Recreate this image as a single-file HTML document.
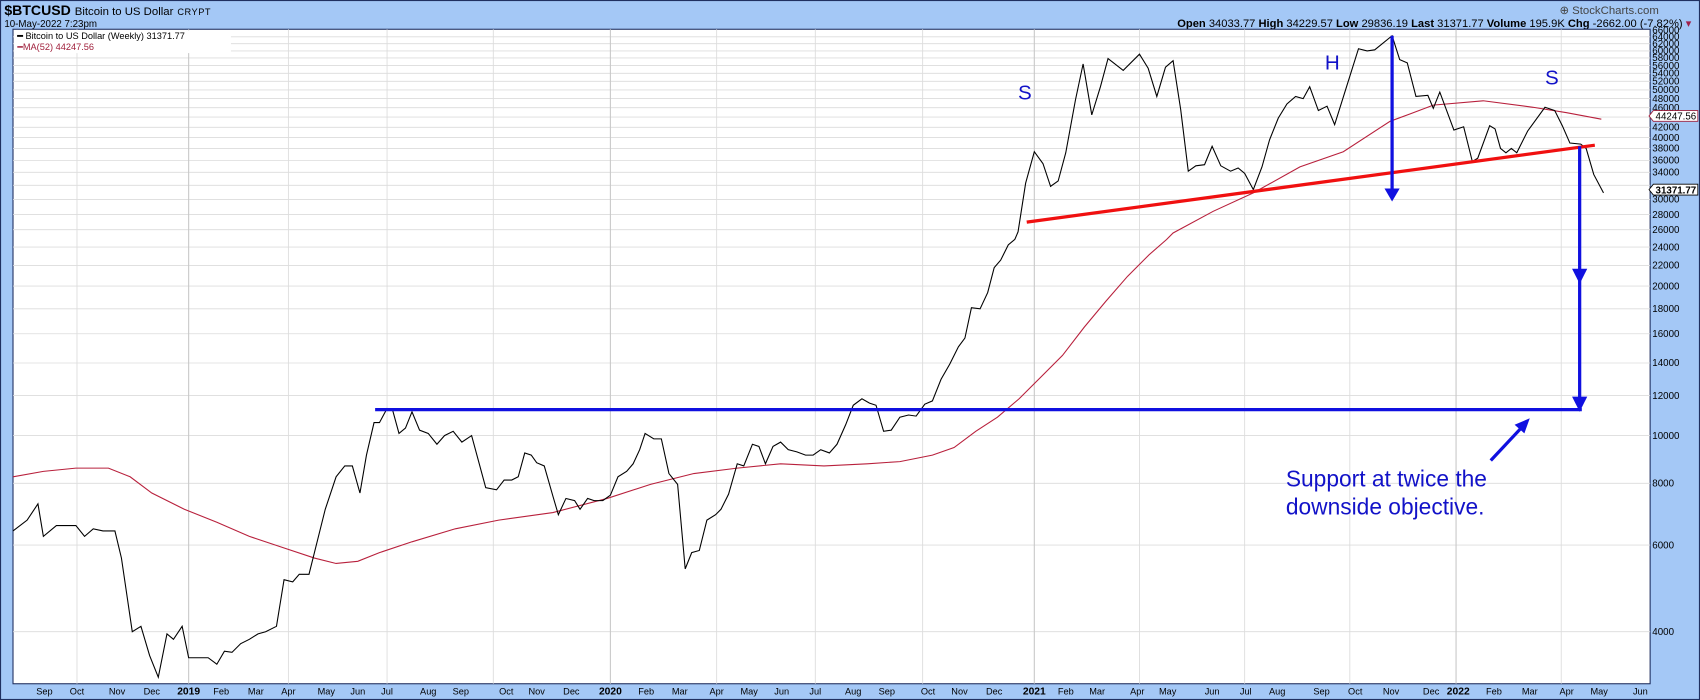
<!DOCTYPE html>
<html><head><meta charset="utf-8"><style>
html,body{margin:0;padding:0;background:#a4c8f6;}
svg{display:block;}
text{font-family:"Liberation Sans",sans-serif;}
</style></head><body>
<svg width="1700" height="700" viewBox="0 0 1568 646" preserveAspectRatio="none" xmlns="http://www.w3.org/2000/svg">
<rect x="0" y="0" width="1568" height="646" fill="#a4c8f6"/>
<rect x="0.5" y="0.5" width="1567" height="645" fill="none" stroke="#203060" stroke-width="1"/>
<text x="4" y="14" font-size="13" font-weight="bold" fill="#000">$BTCUSD <tspan font-weight="normal" font-size="10.5">Bitcoin to US Dollar</tspan> <tspan font-weight="normal" font-size="8.5" letter-spacing="0.5">CRYPT</tspan></text>
<text x="4" y="25" font-size="9" fill="#000">10-May-2022 7:23pm</text>
<text x="1530" y="13" font-size="10.5" text-anchor="end" fill="#444">⊕ StockCharts.com</text>
<text x="1560" y="25" font-size="10.3" text-anchor="end" fill="#000"><tspan font-weight="bold">Open</tspan> 34033.77 <tspan font-weight="bold">High</tspan> 34229.57 <tspan font-weight="bold">Low</tspan> 29836.19 <tspan font-weight="bold">Last</tspan> 31371.77 <tspan font-weight="bold">Volume</tspan> 195.9K <tspan font-weight="bold">Chg</tspan> -2662.00 (-7.82%) <tspan fill="#a0204a">▾</tspan></text>
<rect x="12" y="27" width="1510" height="604" fill="#fff" stroke="#203060" stroke-width="1"/>
<g stroke="#dcdcdc" stroke-width="0.8">
<line x1="12" x2="1522" y1="583" y2="583"/><line x1="12" x2="1522" y1="503" y2="503"/><line x1="12" x2="1522" y1="446" y2="446"/><line x1="12" x2="1522" y1="402" y2="402"/><line x1="12" x2="1522" y1="365" y2="365"/><line x1="12" x2="1522" y1="335" y2="335"/><line x1="12" x2="1522" y1="308" y2="308"/><line x1="12" x2="1522" y1="285" y2="285"/><line x1="12" x2="1522" y1="264" y2="264"/><line x1="12" x2="1522" y1="245" y2="245"/><line x1="12" x2="1522" y1="228" y2="228"/><line x1="12" x2="1522" y1="212" y2="212"/><line x1="12" x2="1522" y1="198" y2="198"/><line x1="12" x2="1522" y1="184" y2="184"/><line x1="12" x2="1522" y1="171" y2="171"/><line x1="12" x2="1522" y1="159" y2="159"/><line x1="12" x2="1522" y1="148" y2="148"/><line x1="12" x2="1522" y1="137" y2="137"/><line x1="12" x2="1522" y1="127" y2="127"/><line x1="12" x2="1522" y1="117.5" y2="117.5"/><line x1="12" x2="1522" y1="108" y2="108"/><line x1="12" x2="1522" y1="99.4" y2="99.4"/><line x1="12" x2="1522" y1="91" y2="91"/><line x1="12" x2="1522" y1="83" y2="83"/><line x1="12" x2="1522" y1="75" y2="75"/><line x1="12" x2="1522" y1="67.7" y2="67.7"/><line x1="12" x2="1522" y1="60.5" y2="60.5"/><line x1="12" x2="1522" y1="53.5" y2="53.5"/><line x1="12" x2="1522" y1="47" y2="47"/><line x1="12" x2="1522" y1="40.3" y2="40.3"/><line x1="12" x2="1522" y1="34" y2="34"/>
<line x1="71" x2="71" y1="27" y2="631"/><line x1="266" x2="266" y1="27" y2="631"/><line x1="357" x2="357" y1="27" y2="631"/><line x1="455" x2="455" y1="27" y2="631"/><line x1="661" x2="661" y1="27" y2="631"/><line x1="752" x2="752" y1="27" y2="631"/><line x1="851" x2="851" y1="27" y2="631"/><line x1="1051" x2="1051" y1="27" y2="631"/><line x1="1148" x2="1148" y1="27" y2="631"/><line x1="1245" x2="1245" y1="27" y2="631"/><line x1="1440" x2="1440" y1="27" y2="631"/>
</g>
<g stroke="#c8c8c8" stroke-width="1">
<line x1="174" x2="174" y1="27" y2="631"/><line x1="563" x2="563" y1="27" y2="631"/><line x1="954" x2="954" y1="27" y2="631"/><line x1="1343" x2="1343" y1="27" y2="631"/>
</g>
<rect x="13" y="28" width="200" height="21" fill="#fff"/>
<text x="16" y="36" font-size="8.5" fill="#000"><tspan font-weight="bold">━</tspan> Bitcoin to US Dollar (Weekly) 31371.77</text>
<text x="16" y="46" font-size="8.5" fill="#a0203c">━MA(52) 44247.56</text>
<polyline fill="none" stroke="#b8203c" stroke-width="1" points="12,440 40,435 70,432 100,432 120,440 140,455 170,470 200,482 230,495 260,505 290,515 310,520 330,518 350,510 380,500 420,488 460,480 510,473 560,460 600,447 640,437 680,432 720,428 760,430 800,428 830,426 860,420 880,413 900,398 920,385 940,368 960,348 980,328 1000,302 1020,278 1040,255 1060,235 1076,221 1082,215 1119,195 1156,178 1199,154 1239,140 1282,112 1301,105 1322,97 1368,93 1414,99 1445,104 1477,110"/>
<polyline fill="none" stroke="#000" stroke-width="1" points="12,490 25,480 35,465 40,495 52,485 60,485 70,485 78,495 86,488 95,490 106,490 112,515 122,583 130,578 138,605 146,625 154,585 160,590 168,578 174,607 183,607 192,607 200,613 207,601 214,602 222,594 230,590 238,585 245,583 255,578 262,535 270,537 276,530 285,530 290,510 300,470 310,440 318,430 325,430 332,455 338,420 345,390 350,390 357,377 362,378 368,400 374,395 380,380 387,397 395,400 403,410 410,402 418,398 426,408 435,402 448,450 458,452 465,443 472,443 478,440 484,418 490,420 495,427 502,430 510,458 515,475 522,460 530,462 535,470 542,460 548,462 556,462 563,457 570,440 578,435 584,428 590,415 595,400 603,405 610,405 617,437 625,447 632,525 638,510 645,508 652,480 660,475 665,470 672,456 680,428 686,430 694,410 700,412 706,428 713,412 720,408 727,415 735,417 743,420 750,420 757,415 765,418 772,410 780,392 787,374 795,368 802,372 808,374 815,398 822,397 830,385 838,383 845,384 853,373 860,370 868,350 876,336 884,320 890,312 896,284 904,285 911,270 917,247 923,240 930,226 936,221 939,214 946,169 954,140 962,151 969,172 976,167 983,141 992,92 999,59 1007,106 1015,80 1022,54 1036,65 1051,50 1059,63 1067,89 1075,62 1082,56 1089,101 1096,158 1103,153 1111,152 1118,135 1126,153 1135,158 1142,155 1148,160 1156,175 1164,154 1171,129 1179,109 1187,96 1195,89 1202,91 1208,80 1216,102 1224,98 1231,115 1242,80 1253,45 1261,47 1268,46 1284,33 1291,55 1298,58 1306,89 1317,88 1322,100 1328,85 1341,120 1350,117 1358,149 1363,146 1374,116 1379,119 1384,137 1389,141 1394,137 1399,141 1409,121 1425,99 1434,102 1441,116 1448,132 1458,133 1463,137 1470,161 1479,178"/>
<line x1="947" y1="205" x2="1471" y2="134" stroke="#f01010" stroke-width="3"/>
<g stroke="#1010e0" stroke-width="3" fill="#1010e0">
<line x1="346" y1="378" x2="1459" y2="378"/>
<line x1="1284" y1="33" x2="1284" y2="176"/>
<line x1="1457" y1="135" x2="1457" y2="372"/>
<line x1="1375" y1="425" x2="1404" y2="394"/>
</g>
<g fill="#1010e0">
<polygon points="1277,174 1291,174 1284,186"/>
<polygon points="1450,248 1464,248 1457,262"/>
<polygon points="1450,366 1464,366 1457,380"/>
<polygon points="1411,386 1397,392 1406,400"/>
</g>
<g fill="#1212c8" font-size="19">
<text x="939" y="92">S</text>
<text x="1222" y="64">H</text>
<text x="1425" y="78">S</text>
</g>
<text x="1186" y="449" font-size="21" fill="#1212c8">Support at twice the</text>
<text x="1186" y="475" font-size="21" fill="#1212c8">downside objective.</text>
<g font-size="9" fill="#000">
<text x="1524" y="586">4000</text><text x="1524" y="506">6000</text><text x="1524" y="449">8000</text><text x="1524" y="405">10000</text><text x="1524" y="368">12000</text><text x="1524" y="338">14000</text><text x="1524" y="311">16000</text><text x="1524" y="288">18000</text><text x="1524" y="267">20000</text><text x="1524" y="248">22000</text><text x="1524" y="231">24000</text><text x="1524" y="215">26000</text><text x="1524" y="201">28000</text><text x="1524" y="187">30000</text><text x="1524" y="162">34000</text><text x="1524" y="151">36000</text><text x="1524" y="140">38000</text><text x="1524" y="130">40000</text><text x="1524" y="120.5">42000</text><text x="1524" y="102.4">46000</text><text x="1524" y="94">48000</text><text x="1524" y="86">50000</text><text x="1524" y="78">52000</text><text x="1524" y="70.7">54000</text><text x="1524" y="63.5">56000</text><text x="1524" y="56.5">58000</text><text x="1524" y="50">60000</text><text x="1524" y="43.3">62000</text><text x="1524" y="37">64000</text><text x="1524" y="31">66000</text>
</g>
<polygon points="1521,107 1525,102 1566,102 1566,112 1525,112" fill="#fff" stroke="#a0203c" stroke-width="0.8"/>
<text x="1527" y="110.5" font-size="9" fill="#000">44247.56</text>
<polygon points="1521,175 1525,170 1566,170 1566,180 1525,180" fill="#fff" stroke="#000" stroke-width="0.8"/>
<text x="1527" y="178.5" font-size="9" font-weight="bold" fill="#000">31371.77</text>
<g font-size="8.5" fill="#000" text-anchor="middle">
<text x="41" y="641">Sep</text><text x="71" y="641">Oct</text><text x="108" y="641">Nov</text><text x="140" y="641">Dec</text><text x="174" y="641" font-weight="bold" font-size="9.5">2019</text><text x="204" y="641">Feb</text><text x="236" y="641">Mar</text><text x="266" y="641">Apr</text><text x="301" y="641">May</text><text x="330" y="641">Jun</text><text x="357" y="641">Jul</text><text x="395" y="641">Aug</text><text x="425" y="641">Sep</text><text x="467" y="641">Oct</text><text x="495" y="641">Nov</text><text x="527" y="641">Dec</text><text x="563" y="641" font-weight="bold" font-size="9.5">2020</text><text x="596" y="641">Feb</text><text x="627" y="641">Mar</text><text x="661" y="641">Apr</text><text x="691" y="641">May</text><text x="721" y="641">Jun</text><text x="752" y="641">Jul</text><text x="787" y="641">Aug</text><text x="818" y="641">Sep</text><text x="856" y="641">Oct</text><text x="885" y="641">Nov</text><text x="917" y="641">Dec</text><text x="954" y="641" font-weight="bold" font-size="9.5">2021</text><text x="983" y="641">Feb</text><text x="1012" y="641">Mar</text><text x="1049" y="641">Apr</text><text x="1077" y="641">May</text><text x="1118" y="641">Jun</text><text x="1149" y="641">Jul</text><text x="1178" y="641">Aug</text><text x="1219" y="641">Sep</text><text x="1250" y="641">Oct</text><text x="1283" y="641">Nov</text><text x="1320" y="641">Dec</text><text x="1345" y="641" font-weight="bold" font-size="9.5">2022</text><text x="1378" y="641">Feb</text><text x="1411" y="641">Mar</text><text x="1445" y="641">Apr</text><text x="1475" y="641">May</text><text x="1513" y="641">Jun</text>
</g>
</svg>
</body></html>
